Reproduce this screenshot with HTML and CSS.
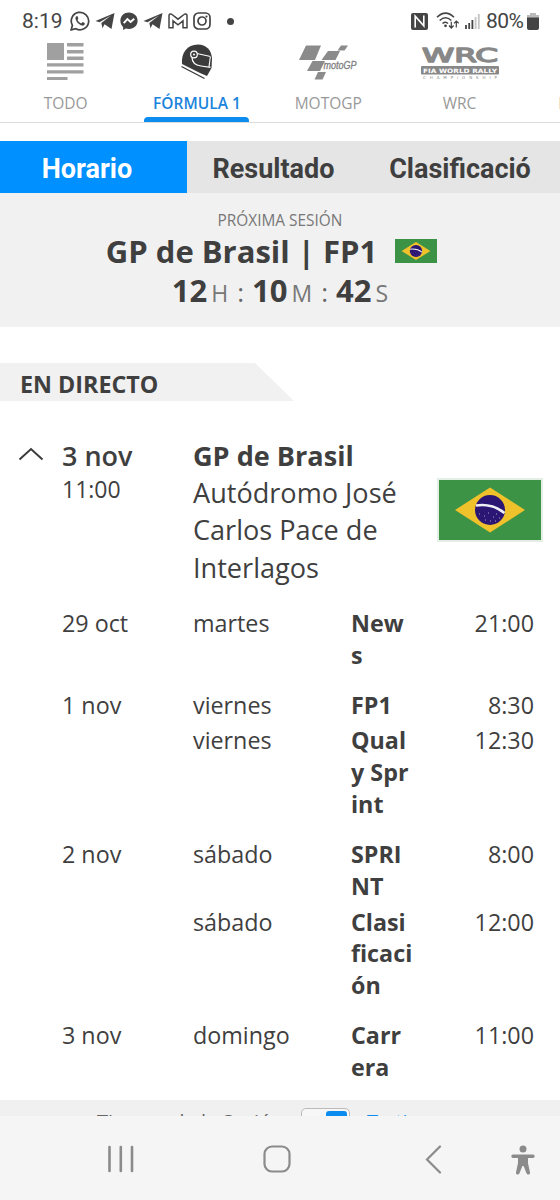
FILE: index.html
```html
<!DOCTYPE html>
<html lang="es">
<head>
  <meta charset="utf-8">
  <title>Horario - Fórmula 1</title>
  <meta name="viewport" content="width=device-width, initial-scale=1.0">
  <link rel="stylesheet" href="styles.css">
</head>
<body>
  <!-- shared flag drawing -->
  <svg class="defs" width="0" height="0">
    <symbol id="flag-br" viewBox="0 0 102 60" preserveAspectRatio="none">
      <rect width="102" height="60" fill="#3c9245"/>
      <path d="M16 30 51 7.500 86 30 51 52.500z" fill="#efc12b"/>
      <circle cx="51" cy="30" r="15" fill="#2b1673"/>
      <path d="M37 25.500Q53 23 65.500 33" fill="none" stroke="#eef0f4" stroke-width="2.500"/>
      <path d="M40 34h1M45 36h1M49 33h1M54 37h1M57 34h1M51 41h1M46 40h1M60 38h1M56 41h1" stroke="#a79cc9" stroke-width="1"/>
    </symbol>
  </svg>

  <!-- phone status bar -->
  <div class="status-bar">
    <div class="status-left">
      <span class="clock">8:19</span>
      <svg width="20" height="20" viewBox="0 0 20 20"><path d="M1.200 18.800 2.400 14.300A8.700 8.700 0 1 1 5.900 17.700z" fill="none" stroke="#444" stroke-width="1.700"/><path d="M6.800 5.100c-.9.400-1.500 1.300-1.300 2.500.5 3.200 3.400 6.300 6.600 7 1.300.2 2.400-.5 2.700-1.700l-.1-.8-2.200-1-1.300 1.300c-1.800-.8-2.900-1.900-3.700-3.500l.9-1.300-.9-2.300z" fill="#444"/></svg>
      <svg width="20" height="18" viewBox="0 0 20 18"><path d="M19.500 1 16.500 17 9.500 12.300 7.500 16.300 6.300 11 16 3.500 4.500 10.200.5 9z" fill="#444"/></svg>
      <svg width="18" height="19" viewBox="0 0 18 19"><path d="M9 .5C4 .5.4 4 .4 8.800c0 2.600 1 4.600 2.700 6.100v3l2.800-1.300c1 .3 2 .4 3.100.4 5 0 8.600-3.500 8.600-8.200S14 .5 9 .5z" fill="#444"/><path d="m3.700 11.200 3.700-4.100 3.200 2.900 3.600-3.300" fill="none" stroke="#fff" stroke-width="2"/></svg>
      <svg width="20" height="18" viewBox="0 0 20 18"><path d="M19.500 1 16.500 17 9.500 12.300 7.500 16.300 6.300 11 16 3.500 4.500 10.200.5 9z" fill="#444"/></svg>
      <svg width="20" height="16" viewBox="0 0 20 16"><path d="M1 2.500V14.800H5V7.800L10 11.800 15 7.800V14.800H19V2.500C19 .8 17.200.5 16 1.500L10 6.200 4 1.500C2.800.5 1 .8 1 2.500z" fill="none" stroke="#444" stroke-width="1.500"/></svg>
      <svg width="18" height="18" viewBox="0 0 18 18"><rect x="1" y="1" width="16" height="16" rx="4.500" fill="none" stroke="#444" stroke-width="1.700"/><circle cx="9" cy="9" r="4" fill="none" stroke="#444" stroke-width="1.700"/><circle cx="13.500" cy="4.500" r="1.100" fill="#444"/></svg>
      <span class="dot"></span>
    </div>
    <div class="status-right">
      <svg width="17" height="17" viewBox="0 0 17 17"><rect width="17" height="17" rx="2" fill="#444"/><path d="M4.200 14.500V3.200l8.600 9.600V2.500M4.200 3.200 12.800 12.800" fill="none" stroke="#fff" stroke-width="1.600"/></svg>
      <svg width="23" height="18" viewBox="0 0 23 18"><g fill="none" stroke="#444" stroke-width="1.600"><path d="M1 5.300Q9.500-3 18 5.300M3.700 8.500Q9.500 3 15.300 8.500M6.500 11.500Q9.500 9 12 11.500"/><path d="M15.300 9.800v6M13 13.500l2.300 2.500 2.300-2.500M20.300 15.500V9M18 11.300 20.300 9l2.300 2.300" stroke-width="1.200"/></g><circle cx="9.500" cy="13.800" r="1.400" fill="#444"/></svg>
      <svg width="15" height="15" viewBox="0 0 15 15"><path d="M1 11v4M4.200 9v6M7.400 6v9" stroke="#444" stroke-width="1.800"/><path d="M10.600 3v12M13.800 0v15" stroke="#c4c4c4" stroke-width="1.800"/></svg>
      <span class="battery-level">80%</span>
      <svg width="12" height="17" viewBox="0 0 12 17"><path d="M3 0h6v2h3v4H0V2h3z" fill="#bbb"/><path d="M0 4.500h12V15q0 2-2 2H2q-2 0-2-2z" fill="#444"/></svg>
    </div>
  </div>

  <!-- championship selector -->
  <nav class="series">
    <a class="series-item">
      <svg class="series-icon" width="38" height="38" viewBox="0 0 38 38"><path d="M0 1h17v17H0zM20 1h16.500v3.500H20zM20 8h16.500v3.500H20zM20 14.500h16.500V18H20zM0 21.300h36.500v3.300H0zM0 28.200h36.500v3.300H0zM0 35h20.500v3H0z" fill="#a0a0a0"/></svg>
      <span>TODO</span>
    </a>
    <a class="series-item active">
      <svg class="series-icon" width="34" height="38" viewBox="0 0 34 38"><path d="M2 22C1 11 7 2.500 18 2.500 26 2.500 31.500 8 32 16.500L31.500 26 27 34 20 31z" fill="#3b3b3b"/><path d="M17 11.500 30.500 14.500M12 15.500q0 7 9 8.500l9.500 1.400" fill="none" stroke="#fff" stroke-width="1.200"/><circle cx="14" cy="12.500" r="3.300" fill="#3b3b3b" stroke="#fff" stroke-width="1.200"/><circle cx="14" cy="12.500" r="1" fill="#fff"/><path d="m30.300 15-1.300 10" stroke="#fff" stroke-width="1.100"/><path d="m1.500 24.500 23 12" stroke="#3b3b3b" stroke-width="1.400"/></svg>
      <span>FÓRMULA 1</span>
    </a>
    <a class="series-item">
      <svg class="series-icon" width="60" height="38" viewBox="0 0 60 38"><path d="M8 3.500H23L17 18H1zM30 9H42L37.500 18H23.500zM43 3.500H50L46.500 8.500H39.500zM14.500 19H27L22 29H9zM20 30H28L24.500 37.500H16.500z" fill="#8b8b8b"/><text x="25.500" y="27" textLength="33" lengthAdjust="spacingAndGlyphs" class="motogp-text">motoGP</text></svg>
      <span>MOTOGP</span>
    </a>
    <a class="series-item">
      <svg class="series-icon" width="78" height="38" viewBox="0 0 78 38"><text x="1" y="19.500" textLength="76" lengthAdjust="spacingAndGlyphs" class="wrc-text">WRC</text><rect x="0" y="24" width="78" height="8.500" rx="1" fill="#888"/><text x="2" y="30.700" textLength="74" lengthAdjust="spacingAndGlyphs" class="wrc-band">FIA WORLD RALLY</text><text x="2" y="36.500" textLength="74" class="wrc-sub">CHAMPIONSHIP</text></svg>
      <span>WRC</span>
    </a>
    <a class="series-item"><span>INDYCAR</span></a>
  </nav>

  <main class="content">
    <div class="tabs">
      <a class="tab selected">Horario</a>
      <a class="tab">Resultado</a>
      <a class="tab">Clasificació</a>
    </div>

    <!-- countdown to next session -->
    <section class="next-session">
      <p class="label">PRÓXIMA SESIÓN</p>
      <h1><span>GP de Brasil | FP1</span><svg class="flag-small"><use href="#flag-br"/></svg></h1>
      <p class="countdown"><b>12</b><i>H</i><em>:</em><b>10</b><i>M</i><em>:</em><b>42</b><i>S</i></p>
    </section>

    <h2 class="live">EN DIRECTO</h2>

    <section class="event">
      <svg class="chevron" width="26" height="14" viewBox="0 0 26 14"><path d="M1.500 12.500 13 2l11.500 10.500" fill="none" stroke="#3b3b3b" stroke-width="2"/></svg>
      <div class="event-date">
        <strong>3 nov</strong>
        <span>11:00</span>
      </div>
      <div class="event-name">
        <strong>GP de Brasil</strong>
        <span>Autódromo José Carlos Pace de Interlagos</span>
      </div>
      <svg class="flag-large"><use href="#flag-br"/></svg>
    </section>

    <!-- sessions -->
    <div class="sessions">
      <div class="day">
        <div class="row"><span>29 oct</span><span>martes</span><b>News</b><time>21:00</time></div>
      </div>
      <div class="day">
        <div class="row"><span>1 nov</span><span>viernes</span><b>FP1</b><time>8:30</time></div>
        <div class="row"><span></span><span>viernes</span><b>Qualy&nbsp;Sprint</b><time>12:30</time></div>
      </div>
      <div class="day">
        <div class="row"><span>2 nov</span><span>sábado</span><b>SPRINT</b><time>8:00</time></div>
        <div class="row"><span></span><span>sábado</span><b>Clasificación</b><time>12:00</time></div>
      </div>
      <div class="day">
        <div class="row"><span>3 nov</span><span>domingo</span><b>Carrera</b><time>11:00</time></div>
      </div>
    </div>
  </main>

  <!-- time zone switch, cut off by the navigation bar -->
  <div class="timezone">
    <span class="tz-label">Tiempo de la Sesión</span>
    <span class="switch"><span class="knob"></span></span>
    <span class="tz-mine">Tu tiempo</span>
  </div>

  <div class="nav-bar">
    <svg width="28" height="28" viewBox="0 0 28 28"><path d="M2.500 2v24M13.800 2v24M25 2v24" stroke="#8b8b8b" stroke-width="2.600" stroke-linecap="round"/></svg>
    <svg width="28" height="28" viewBox="0 0 28 28"><rect x="1.500" y="1.500" width="25" height="25" rx="7.500" fill="none" stroke="#8b8b8b" stroke-width="2.200"/></svg>
    <svg width="17" height="29" viewBox="0 0 17 29"><path d="M15 1.500 2 14.500l13 13" fill="none" stroke="#8b8b8b" stroke-width="2.200" stroke-linecap="round"/></svg>
    <svg width="24" height="30" viewBox="0 0 24 30"><circle cx="12" cy="4" r="3.500" fill="#8b8b8b"/><path d="M2 9.500h20q1.700 0 1.700 1.700T22 13h-5v5l2 9.500q.3 1.800-1.300 2-1.700.2-2.300-1.500L12.600 21h-1.200L8.600 28q-.6 1.700-2.300 1.500-1.600-.2-1.300-2L7 18v-5H2q-1.700 0-1.700-1.800T2 9.500z" fill="#8b8b8b"/></svg>
  </div>
</body>
</html>
```
FILE: styles.css
```css
* {
  margin: 0;
  padding: 0;
  box-sizing: border-box;
}
body {
  width: 560px;
  height: 1200px;
  display: flex;
  flex-direction: column;
  overflow: hidden;
  background: #fff;
  color: #3f3f3f;
  font-family: "Open Sans", "Noto Sans", sans-serif;
}
svg {
  display: block;
  flex-shrink: 0;
}
.defs {
  position: absolute;
}
/* phone status bar */
.status-bar {
  height: 42px;
  flex-shrink: 0;
  padding: 0 21px 0 22px;
  display: flex;
  align-items: center;
  justify-content: space-between;
  font-family: Roboto, sans-serif;
  font-size: 21px;
  color: #444;
}
.status-left,
.status-right {
  display: flex;
  align-items: center;
}
.status-left {
  gap: 5px;
}
.clock {
  width: 43px;
}
.dot {
  width: 7px;
  height: 7px;
  margin-left: 11px;
  border-radius: 50%;
  background: #444;
}
.status-right {
  gap: 6px;
}
.status-right svg:first-child {
  margin-right: 2px;
}
.battery-level {
  width: 35px;
  letter-spacing: -0.6px;
}
/* championship selector */
.series {
  height: 81px;
  flex-shrink: 0;
  display: flex;
  overflow: hidden;
  border-bottom: 1px solid #ddd;
}
.series-item {
  width: 131.3px;
  height: 80px;
  flex-shrink: 0;
  display: flex;
  flex-direction: column;
  align-items: center;
  justify-content: flex-end;
  font-size: 15.5px;
  line-height: 20px;
  color: #999;
}
.series-icon {
  margin-bottom: 13px;
  overflow: visible;
}
.series-item span {
  width: 105px;
  height: 29px;
  text-align: center;
  white-space: nowrap;
}
.series-item.active span {
  color: #1a84dc;
  font-size: 15.5px;
  font-weight: 600;
}
.series-item.active span::after {
  content: "";
  display: block;
  height: 5px;
  margin-top: 4px;
  border-radius: 4px 4px 0 0;
  background: #0d8cf0;
}
.motogp-text {
  font: italic 10px "Liberation Sans", sans-serif;
  fill: #808080;
  stroke: #808080;
  stroke-width: 0.3;
}
.wrc-text {
  font: 20px "DejaVu Sans", sans-serif;
  fill: #888;
  stroke: #888;
  stroke-width: 1.4;
  stroke-linejoin: round;
}
.wrc-band {
  font: bold 6px "DejaVu Sans", sans-serif;
  fill: #fff;
}
.wrc-sub {
  font: 4px "DejaVu Sans", sans-serif;
  fill: #888;
}
/* main content */
.content {
  height: 977px;
  flex-shrink: 0;
  padding-top: 18px;
}
.tabs {
  height: 52px;
  display: grid;
  grid-template-columns: 187px 173px 200px;
  background: #e5e5e5;
}
.tab {
  height: 52px;
  font: bold 27px/56px Roboto, sans-serif;
  text-align: center;
}
.selected {
  background: #0090ff;
  color: #fff;
  padding-right: 13px;
}
.next-session {
  height: 134px;
  padding-top: 17px;
  background: #f1f1f1;
  text-align: center;
}
.label {
  font-size: 15.4px;
  line-height: 21px;
  color: #777;
}
.next-session h1 {
  display: flex;
  align-items: center;
  justify-content: center;
  gap: 18px;
  padding-right: 17px;
  font-size: 31px;
  line-height: 40px;
}
.flag-small {
  width: 42px;
  height: 24px;
}
.countdown {
  display: flex;
  align-items: baseline;
  justify-content: center;
  font-size: 31px;
  line-height: 38px;
}
.countdown i {
  margin-left: 4px;
  font-size: 23px;
  font-style: normal;
  color: #777;
}
.countdown em {
  margin: 0 8px 0 9px;
  font-size: 26px;
  font-style: normal;
  color: #666;
}
.live {
  width: 294px;
  height: 38px;
  margin-top: 36px;
  padding-left: 20px;
  background: #f1f1f1;
  clip-path: polygon(0 0, 255px 0, 100% 100%, 0 100%);
  font-size: 23.3px;
  line-height: 43px;
}
/* race weekend */
.event {
  display: grid;
  grid-template-columns: 43px 131px 240px 1fr;
  padding: 36px 0 0 19px;
}
.chevron {
  margin-top: 10px;
  margin-left: -1px;
}
.event strong,
.event-name span,
.event-date span {
  display: block;
}
.event-date strong {
  font-size: 27px;
  font-weight: 600;
  line-height: 37px;
}
.event-date span {
  font-size: 23px;
  line-height: 31px;
}
.event-name {
  font-size: 27.1px;
  line-height: 37.2px;
}
.event-name span {
  width: 225px;
}
.flag-large {
  width: 106px;
  height: 64px;
  margin: 41px 0 0 4px;
  border: 2px solid #e4eee4;
}
.sessions {
  padding: 22px 26px 0 62px;
}
.day {
  margin-bottom: 18px;
}
.row {
  display: grid;
  grid-template-columns: 131px 158px 62px 1fr;
  margin-bottom: 4px;
  font-size: 23.3px;
  line-height: 31.85px;
}
.row b {
  word-break: break-all;
}
.row time {
  text-align: right;
}
/* time zone switch */
.timezone {
  height: 16px;
  flex-shrink: 0;
  display: flex;
  overflow: hidden;
  padding: 8px 0 0 97px;
  background: #f0f0f0;
  font-size: 20px;
  line-height: 26px;
  color: #666;
}
.tz-label {
  width: 204px;
  padding-top: 1px;
}
.switch {
  width: 49px;
  height: 28px;
  flex-shrink: 0;
  padding: 2px;
  display: flex;
  justify-content: flex-end;
  border: 1.5px solid #bbb;
  border-radius: 5px;
  background: #f7f7f7;
}
.knob {
  width: 21px;
  height: 21px;
  border-radius: 3px;
  background: #0d8cf0;
}
.tz-mine {
  margin-left: 17px;
  padding-top: 1px;
  color: #0d8cf0;
}
/* phone navigation bar */
.nav-bar {
  height: 84px;
  flex-shrink: 0;
  display: grid;
  grid-template-columns: 156px 157px 91px 24px;
  padding: 29px 0 0 107px;
  background: #f5f5f5;
}
.nav-bar svg:nth-child(3) {
  margin-left: 5px;
}
```
